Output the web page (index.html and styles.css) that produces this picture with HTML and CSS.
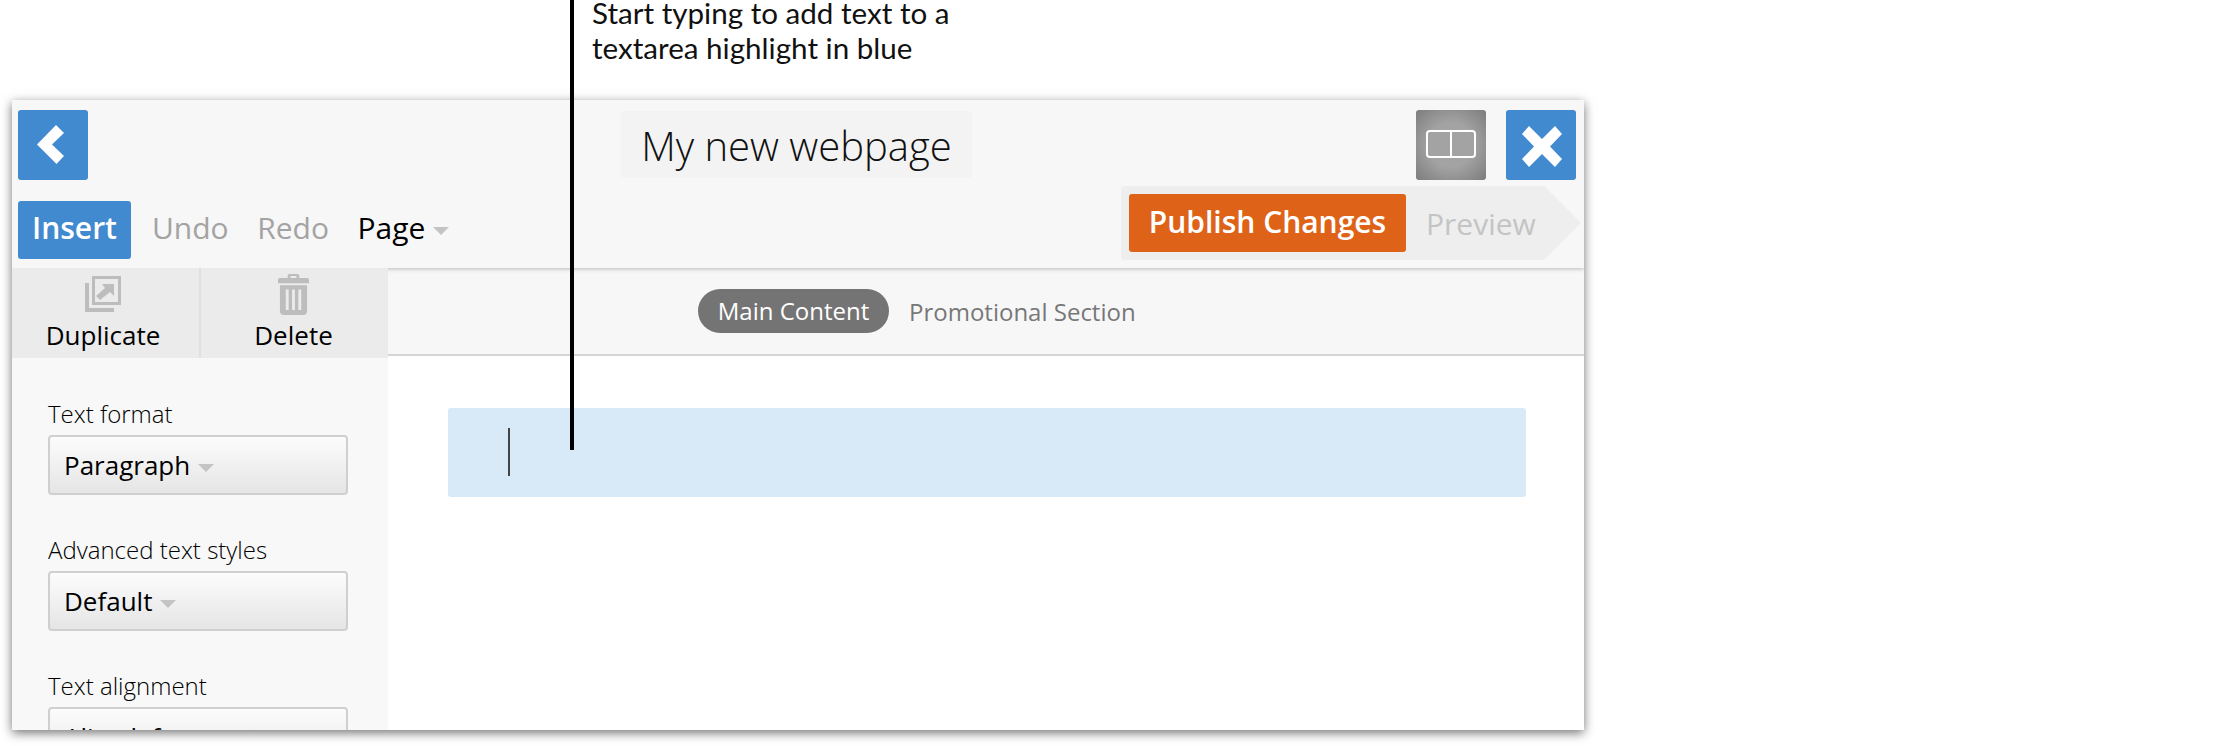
FILE: index.html
```html
<!DOCTYPE html>
<html lang="en">
<head>
    <meta charset="UTF-8">
    <title>Editor</title>
    <link rel="stylesheet" href="styles.css">
</head>
<body>
<p class="note">Start typing to add text to a<br>textarea highlight in blue</p>
<div class="line"></div>

<div class="window">
    <div class="topbar">
        <div class="row-one">
            <a class="square blue">
                <svg width="70" height="70" viewBox="0 0 70 70"><path d="M19 34.500 L38 15 L46 23 L34 34.500 L46 46 L38.500 54 Z" fill="#fff"/></svg>
            </a>
            <div class="title">My new webpage</div>
            <a class="square grey">
                <svg width="70" height="70" viewBox="0 0 70 70"><rect x="11" y="21" width="48" height="26" rx="3" fill="none" stroke="#fff" stroke-width="2"/><path d="M35 21V47" stroke="#fff" stroke-width="2"/></svg>
            </a>
            <a class="square blue close">
                <svg width="70" height="70" viewBox="0 0 70 70"><path d="M16 24 L23 16 L36 29 L49 16 L56 24 L44 36.500 L56 49 L49 57 L36 44 L23 57 L16 49 L28 36.500 Z" fill="#fff"/></svg>
            </a>
        </div>
        <div class="row-two">
            <a class="insert">Insert</a>
            <a class="tool off">Undo</a>
            <a class="tool off">Redo</a>
            <a class="tool">Page<span class="caret"></span></a>
            <div class="publish-wrap">
                <a class="publish">Publish Changes</a>
                <a class="preview">Preview</a>
            </div>
        </div>
    </div>

    <div class="body">
        <div class="side">
            <div class="tabs">
                <div class="tab">
                    <svg class="dup-icon" width="36" height="36" viewBox="0 0 36 36"><path d="M7 0H36V29H7Z M10 3V26H33V3Z" fill-rule="evenodd" fill="#bdbdbd"/><path d="M0 7H4V32H29V36H0Z" fill="#bdbdbd"/><path d="M17 8H29V20L25 16 15 24 11 20 20 12Z" fill="#bdbdbd"/></svg>
                    <span>Duplicate</span>
                </div>
                <div class="tab">
                    <svg class="del-icon" width="31" height="41" viewBox="0 0 32 40" preserveAspectRatio="none"><path d="M10 4V1.500Q10 0 12 0H20Q22 0 22 1.500V4H30Q32 4 32 6V9H0V6Q0 4 2 4Z M13 2V4H19V2Z" fill-rule="evenodd" fill="#bdbdbd"/><path d="M2 11H30V36Q30 40 26 40H6Q2 40 2 36Z M8 15V35H11V15Z M14.500 15V35H17.500V15Z M21 15V35H24V15Z" fill-rule="evenodd" fill="#bdbdbd"/></svg>
                    <span>Delete</span>
                </div>
            </div>
            <div class="fields">
                <label>Text format</label>
                <div class="select">Paragraph<span class="caret"></span></div>
                <label>Advanced text styles</label>
                <div class="select">Default<span class="caret"></span></div>
                <label>Text alignment</label>
                <div class="select">Align left<span class="caret"></span></div>
            </div>
        </div>
        <div class="main">
            <div class="sections">
                <a class="pill">Main Content</a>
                <a class="section">Promotional Section</a>
            </div>
            <div class="canvas">
                <div class="textarea"><div class="cursor"></div></div>
            </div>
        </div>
    </div>
</div>
</body>
</html>
```

FILE: styles.css
```css
* {
    margin: 0;
    padding: 0;
    box-sizing: border-box;
}

body {
    background: #fff;
    font-family: "Open Sans", "Liberation Sans", sans-serif;
    color: #000;
    overflow: hidden;
    height: 746px;
}

.note {
    height: 100px;
    margin-left: 592px;
    font-family: Lato, "Open Sans", sans-serif;
    font-size: 29.6px;
    line-height: 35px;
    margin-top: -5px;
    margin-bottom: 5px;
    color: #111;
}

.line {
    position: absolute;
    left: 570px;
    top: 0;
    width: 4px;
    height: 450px;
    background: #000;
    z-index: 5;
}

.window {
    width: 1572px;
    height: 630px;
    margin-left: 12px;
    overflow: hidden;
    background: #fff;
    box-shadow: 0 3px 10px rgba(0, 0, 0, .55);
    display: flex;
    flex-direction: column;
}

.topbar {
    height: 168px;
    background: #f7f7f7;
    padding: 10px 8px 0 6px;
    box-shadow: 0 1px 4px rgba(0, 0, 0, .25);
    position: relative;
    z-index: 2;
    flex-shrink: 0;
}

.row-one {
    display: flex;
    height: 70px;
}

.square {
    display: block;
    width: 70px;
    height: 70px;
    border-radius: 3px;
}

.blue {
    background: #418ad0;
}

.grey {
    background: radial-gradient(ellipse at center, #a3a3a3 45%, #7c7c7c 100%);
    margin-left: auto;
}

.close {
    margin-left: 20px;
}

.title {
    margin-left: 533px;
    margin-top: 1px;
    width: 351px;
    height: 67px;
    background: #f3f3f3;
    border-radius: 4px;
    font-weight: 300;
    font-size: 40px;
    line-height: 69px;
    text-align: center;
    color: #111;
}

.row-two {
    display: flex;
    align-items: center;
    margin-top: 6px;
    height: 74px;
}

.insert {
    width: 113px;
    height: 58px;
    margin-top: 14px;
    background: #418ad0;
    color: #fff;
    border-radius: 3px;
    font-size: 30px;
    font-weight: 600;
    line-height: 53px;
    text-align: center;
}

.tool {
    margin-left: 28.5px;
    margin-top: 10px;
    font-size: 30px;
    line-height: 58px;
    color: #000;
}

.insert + .tool {
    margin-left: 21px;
}

.tool.off {
    color: #a3a3a3;
}

.caret {
    display: inline-block;
    width: 0;
    height: 0;
    margin-left: 8px;
    vertical-align: middle;
    border-left: 8px solid transparent;
    border-right: 8px solid transparent;
    border-top: 8px solid #c4c4c4;
}

.publish-wrap {
    display: flex;
    align-items: center;
    margin-left: auto;
    margin-right: -5px;
    width: 460px;
    height: 74px;
    padding-left: 8px;
    background: #eee;
    border-radius: 3px;
    clip-path: polygon(0 0, 423px 0, 100% 50%, 423px 100%, 0 100%);
}

.publish {
    width: 277px;
    height: 58px;
    background: #de6319;
    color: #fff;
    border-radius: 3px;
    font-size: 30px;
    font-weight: 600;
    line-height: 56px;
    text-align: center;
}

.preview {
    margin-left: 20px;
    font-size: 30px;
    color: #c4c4c4;
}

.body {
    flex: 1;
    display: flex;
    min-height: 0;
}

.side {
    width: 376px;
    background: #f8f8f8;
    flex-shrink: 0;
    position: relative;
    z-index: 3;
}

.tabs {
    display: flex;
    height: 90px;
    background: #ebebeb;
}

.tab {
    flex: 1;
    display: flex;
    flex-direction: column;
    align-items: center;
    padding: 6px 2px 0 0;
    font-size: 26px;
}

.tab:first-child {
    flex: none;
    width: 187px;
    padding-right: 5px;
}

.tab span {
    line-height: 36px;
}

.dup-icon {
    margin: 2px 0 5px;
}

.del-icon {
    margin-bottom: 2px;
}

.tab + .tab {
    border-left: 2px solid #e0e0e0;
}

.fields {
    padding: 39px 36px 0;
}

.fields label {
    display: block;
    font-size: 24px;
    font-weight: 300;
    line-height: 34px;
    margin-bottom: 4px;
}

.select {
    width: 300px;
    height: 60px;
    margin-bottom: 38px;
    padding-left: 14px;
    background: linear-gradient(#fcfcfc, #e5e5e5);
    border: 2px solid #cfcfcf;
    border-radius: 4px;
    font-size: 26px;
    line-height: 56px;
}

.main {
    flex: 1;
    display: flex;
    flex-direction: column;
    min-width: 0;
}

.sections {
    height: 88px;
    background: #f7f7f7;
    border-bottom: 2px solid #d4d4d4;
    display: flex;
    align-items: center;
    padding-left: 310px;
}

.pill {
    width: 191px;
    height: 44px;
    background: #747474;
    color: #fff;
    border-radius: 22px;
    font-size: 24px;
    line-height: 44px;
    text-align: center;
}

.section {
    margin-left: 20px;
    font-size: 24px;
    color: #777;
}

.canvas {
    flex: 1;
    padding: 52px 58px 0 60px;
    background: #fff;
}

.textarea {
    height: 89px;
    background: #d8eaf8;
    border-radius: 3px;
    padding: 20px 0 0 60px;
}

.cursor {
    width: 2px;
    height: 48px;
    background: #444;
}
```
